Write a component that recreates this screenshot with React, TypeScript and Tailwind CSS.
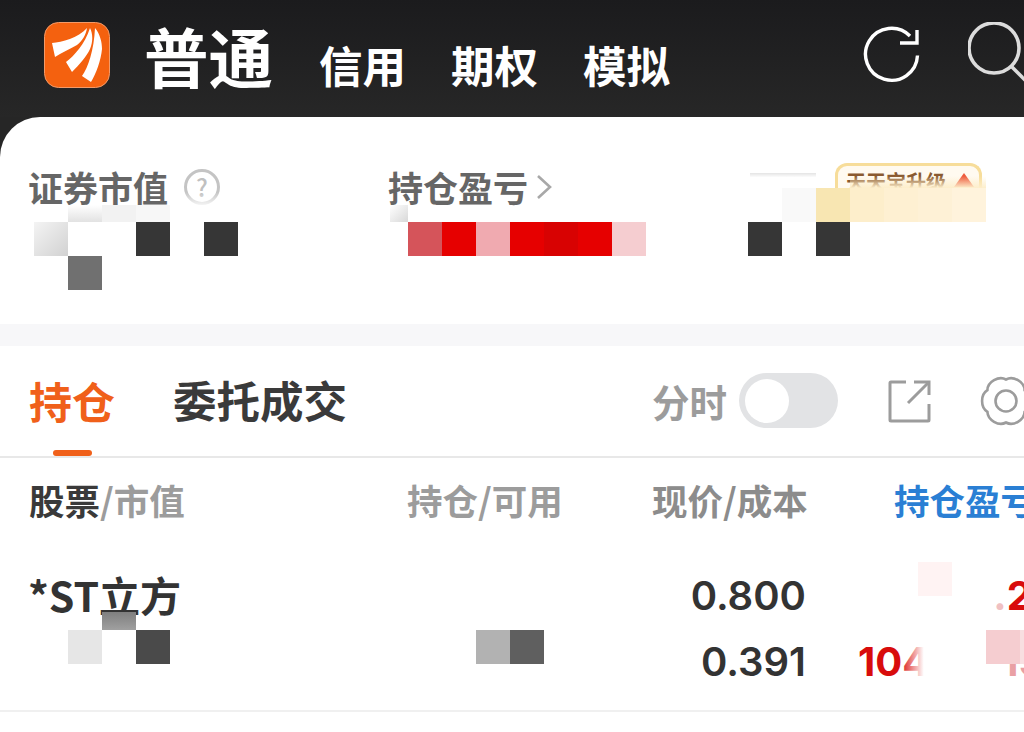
import React from "react";

const CJK = "font-['Noto_Sans_CJK_SC','Noto_Sans',sans-serif]";

// mosaic squares over the hidden values: [left, top, width, height, class]
const tiles: [number, number, number, number, string][] = [
  [183, 192, 40, 16, "bg-gradient-to-b from-transparent to-white"],
  [68, 205, 34, 17, "bg-gradient-to-b from-white to-[#e2e2e2]"],
  [102, 205, 34, 17, "bg-[#f2f2f2]"],
  [136, 205, 34, 17, "bg-[#f7f7f7]"],
  [34, 222, 34, 34, "bg-gradient-to-br from-[#f4f4f4] to-[#d2d2d2]"],
  [136, 222, 34, 34, "bg-[#363636]"],
  [204, 222, 34, 34, "bg-[#363636]"],
  [68, 256, 34, 34, "bg-[#707070]"],
  [390, 205, 18, 17, "bg-gradient-to-br from-white to-[#d8d8d8]"],
  [408, 222, 34, 34, "bg-[#d5545a]"],
  [442, 222, 34, 34, "bg-[#e60000]"],
  [476, 222, 34, 34, "bg-[#f0aab0]"],
  [510, 222, 34, 34, "bg-[#e60000]"],
  [544, 222, 34, 34, "bg-[#d80202]"],
  [578, 222, 34, 34, "bg-[#e60000]"],
  [612, 222, 34, 34, "bg-[#f5cdd0]"],
  [750, 173, 66, 15, "bg-gradient-to-b from-[#e4e4e4] to-white to-30%"],
  [782, 188, 34, 34, "bg-[#f9f9f9]"],
  [816, 188, 34, 34, "bg-[#f8e6b2]"],
  [850, 176, 136, 12, "bg-gradient-to-b from-transparent to-[#fdeecb]"],
  [850, 188, 34, 34, "bg-[#fdeecb]"],
  [884, 188, 34, 34, "bg-[#fef0d2]"],
  [918, 188, 34, 34, "bg-[#fef1d6]"],
  [952, 188, 34, 34, "bg-[#fff3dc]"],
  [748, 222, 34, 34, "bg-[#363636]"],
  [816, 222, 34, 34, "bg-[#363636]"],
  [102, 612, 34, 18, "bg-gradient-to-b from-[#7f7f7f] to-[#a0a0a0]"],
  [68, 630, 34, 34, "bg-[#e6e6e6]"],
  [136, 630, 34, 34, "bg-[#4a4a4a]"],
  [476, 630, 34, 34, "bg-[#b2b2b2]"],
  [510, 630, 34, 34, "bg-[#5f5f5f]"],
  [918, 562, 34, 34, "bg-[#fff3f3]"],
  [900, 636, 34, 50, "bg-gradient-to-r from-transparent to-white to-70%"],
  [986, 630, 34, 34, "bg-[#f5cdd0]"],
  [1020, 630, 4, 34, "bg-[#f8dfe1]"],
];

function Logo() {
  return (
    <svg width="66" height="66" viewBox="0 0 66 66" className="shrink-0">
      <rect x="0.5" y="0.5" width="65" height="65" rx="14" fill="#f4610f" stroke="#f39a68" />
      <path d="M8 21 C18 20 34 16 43 6 C42 13 38 19 33 23 C26 27 17 31 11 35 Z" fill="#fff" />
      <path d="M22 40 C30 34 41 22 46 6 C49 12 49 20 46 27 C43 34 35 43 28 50 Z" fill="#fff" />
      <path d="M38 54 C44 46 50 28 51 6 C56 12 58 20 58 27 C57 38 52 52 47 60 Z" fill="#fff" />
    </svg>
  );
}

function RefreshIcon() {
  return (
    <svg width="60" height="60" viewBox="0 0 60 60" fill="none" stroke="#fff" strokeWidth="3.4" className="shrink-0">
      <path d="M54.5 30.5 A26 26 0 1 1 47 11" />
      <path d="M54 5 V18 H37" />
    </svg>
  );
}

function SearchIcon() {
  return (
    <svg width="60" height="60" viewBox="0 0 60 60" fill="none" stroke="#dcdcdc" strokeWidth="3.6" className="shrink-0">
      <circle cx="26" cy="26" r="25" />
      <path d="M43 44 L58 59" />
    </svg>
  );
}

function ExternalIcon() {
  return (
    <svg width="44" height="44" viewBox="0 0 44 44" fill="none" stroke="#9c9c9c" strokeWidth="3" className="shrink-0">
      <path d="M18 3 H3 a1 1 0 0 0 -1 1 V41 a1 1 0 0 0 1 1 H40 a1 1 0 0 0 1 -1 V25" />
      <path d="M26 3 H41 V16" />
      <path d="M41 3 L20 24" />
    </svg>
  );
}

// six scalloped lobes, one pointing straight left
function gearPath() {
  const pt = (deg: number, r: number) => {
    const a = (deg * Math.PI) / 180;
    return `${(26 + r * Math.cos(a)).toFixed(1)} ${(25 + r * Math.sin(a)).toFixed(1)}`;
  };
  let d = `M${pt(-30, 21.5)}`;
  for (let tip = 0; tip < 360; tip += 60) {
    d += ` C${pt(tip - 14, 26.5)} ${pt(tip + 14, 26.5)} ${pt(tip + 30, 21.5)}`;
  }
  return d + " Z";
}

function GearIcon() {
  return (
    <svg width="56" height="50" viewBox="0 0 56 50" fill="none" stroke="#9c9c9c" strokeWidth="2.6" className="shrink-0 overflow-visible">
      <path d={gearPath()} />
      <circle cx="26" cy="25" r="10.5" />
    </svg>
  );
}

export default function App() {
  return (
    <div className={`relative w-[1024px] h-[732px] overflow-hidden bg-white ${CJK}`}>
      {/* Top bar */}
      <div className="h-[117px] bg-gradient-to-b from-[#1b1b1d] to-[#272727] flex items-start pl-11 pt-[22px]">
        <Logo />
        <div className="ml-[34px] text-[64.5px] leading-[72px] font-bold text-white shrink-0 -mt-[3px]">普通</div>
        <div className="ml-[46px] flex gap-[45px] text-[43.5px] leading-[50px] font-bold text-white mt-[18px] shrink-0">
          <span>信用</span>
          <span>期权</span>
          <span>模拟</span>
        </div>
        <div className="ml-[193px] mt-[3px] shrink-0">
          <RefreshIcon />
        </div>
        <div className="ml-[45px] shrink-0 mt-0">
          <SearchIcon />
        </div>
      </div>

      {/* Assets card */}
      <div className="bg-[#262626]">
        <div className="h-[207px] bg-white rounded-tl-[40px] pt-[48px] pl-[28px] flex">
          <div className="w-[360px] flex items-center h-[44px] text-[35px] leading-[44px] font-bold text-[#666666]">
            <span>证券市值</span>
            <span className="ml-4 w-[36px] h-[36px] rounded-full border-[3px] border-[#c4c4c4] text-[#c0c0c0] text-[24px] leading-[30px] text-center font-medium">
              ?
            </span>
          </div>
          <div className="flex items-center h-[44px] text-[35px] leading-[44px] font-bold text-[#666666]">
            <span>持仓盈亏</span>
            <svg width="16" height="26" viewBox="0 0 16 26" fill="none" stroke="#a8a8a8" strokeWidth="2.6" className="ml-2">
              <path d="M2 2 L14 13 L2 24" />
            </svg>
          </div>
        </div>
      </div>

      <div className="h-[22px] bg-[#f7f7f9]" />

      {/* Tabs */}
      <div className="h-[112px] border-b-2 border-[#e8e8e8] flex items-start pl-[29px] pt-[27px] whitespace-nowrap">
        <div className="relative w-[84px] shrink-0 text-[43px] leading-[54px] font-bold text-[#f0601a]">
          持仓
          <div className="absolute left-[24px] top-[77px] w-[39px] h-[6px] rounded-full bg-[#f0601a]" />
        </div>
        <div className="ml-[60px] w-[173px] shrink-0 text-[43.5px] leading-[54px] font-bold text-[#3a3a3a]">委托成交</div>
        <div className="ml-[306px] w-[74px] shrink-0 text-[37.5px] leading-[56px] font-bold text-[#9c9c9c]">分时</div>
        <div className="ml-[13px] w-[99px] h-[55px] shrink-0 rounded-full bg-[#e2e3e5] p-[6px]">
          <div className="w-[44px] h-[44px] rounded-full bg-white" />
        </div>
        <div className="ml-[50px] mt-[6px] shrink-0">
          <ExternalIcon />
        </div>
        <div className="ml-[48px] mt-[3px] shrink-0">
          <GearIcon />
        </div>
      </div>

      {/* Column heads */}
      <div className="h-[88px] flex pl-[29px] pt-[19px] text-[35.5px] leading-[46px] font-bold whitespace-nowrap">
        <div className="w-[378px] shrink-0 text-[#3a3a3a]">
          股票<span className="text-[#9c9c9c]">/市值</span>
        </div>
        <div className="w-[245px] shrink-0 text-[#9c9c9c]">持仓/可用</div>
        <div className="w-[242px] shrink-0 text-[#8c8c8c]">现价/成本</div>
        <div className="shrink-0 text-[#2a7fd4]">持仓盈亏</div>
      </div>

      {/* Position row */}
      <div className="h-[166px] border-b-2 border-[#f0f0f0] flex pl-[28px] pt-[17px] whitespace-nowrap">
        <div className="w-[625px] shrink-0 text-[41px] leading-[66px] font-bold text-[#333333] -mt-[2px]">*ST立方</div>
        <div className="w-[153px] shrink-0 text-right text-[40px] leading-[66px] font-semibold text-[#333333] font-['Inter',sans-serif]">
          <div>0.800</div>
          <div>0.391</div>
        </div>
        <div className="ml-[52px] shrink-0 font-['Inter',sans-serif] text-[40px] leading-[66px] font-bold text-[#d80c0c]">
          <div>&nbsp;</div>
          <div>104</div>
        </div>
        <div className="ml-[64px] w-[40px] shrink-0 font-['Inter',sans-serif] text-[40px] leading-[66px] font-bold text-[#d80c0c]">
          <div>
            <span className="text-[#f0c0c2]">.</span>2
          </div>
          <div className="ml-2 text-[#e9a0a4]">19</div>
        </div>
      </div>

      {/* Badge, sits under the mosaic */}
      <div className="absolute left-[835px] top-[163px] w-[147px] h-[40px] rounded-t-[12px] border-[3px] border-b-0 border-[#f7dd9a] bg-[#fffaf0] pl-2 pt-[3px] flex items-start gap-2 whitespace-nowrap">
        <span className="text-[20px] leading-[26px] font-bold text-[#8a5a30]">天天宝升级</span>
        <svg width="20" height="14" viewBox="0 0 20 14" className="mt-[4px] shrink-0">
          <path d="M10 0 L20 14 H0 Z" fill="#ee5a3c" />
        </svg>
      </div>

      {/* Mosaic */}
      {tiles.map(([left, top, width, height, cls], i) => (
        <div key={i} className={`absolute ${cls}`} style={{ left, top, width, height }} />
      ))}
    </div>
  );
}
